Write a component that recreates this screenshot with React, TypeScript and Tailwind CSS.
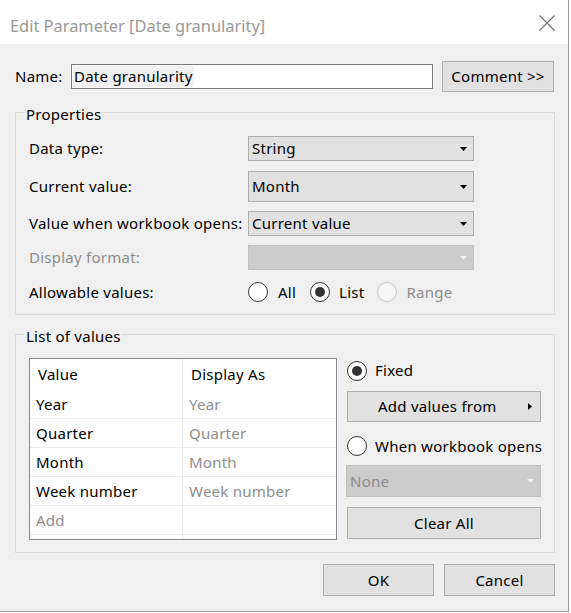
import React from "react";

function Radio({ checked = false, disabled = false }: { checked?: boolean; disabled?: boolean }) {
  return (
    <span
      className={`flex h-[20px] w-[20px] shrink-0 items-center justify-center rounded-full border ${
        disabled ? "border-[#c8c8c8] bg-[#f6f6f6]" : "border-[#333333] bg-white"
      }`}
    >
      {checked && <span className="h-[10px] w-[10px] rounded-full bg-[#333333]" />}
    </span>
  );
}

function DownArrow({ color = "#000000" }: { color?: string }) {
  return (
    <svg width="7" height="4" viewBox="0 0 7 4" className="shrink-0">
      <path d="M0 0H7L3.5 4Z" fill={color} />
    </svg>
  );
}

function RightArrow() {
  return (
    <svg width="4" height="7" viewBox="0 0 4 7" className="shrink-0">
      <path d="M0 0L4 3.5L0 7Z" fill="#000000" />
    </svg>
  );
}

function Select({
  value,
  heightClass,
  disabled = false,
  widthClass = "w-[226px]",
}: {
  value: string;
  heightClass: string;
  disabled?: boolean;
  widthClass?: string;
}) {
  return (
    <div
      className={`flex items-center justify-between border pl-[3px] pr-[6px] ${widthClass} ${heightClass} ${
        disabled ? "border-[#bfbfbf] bg-[#cccccc] text-[#8d8d8d]" : "border-[#adadad] bg-[#e1e1e1] text-black"
      }`}
    >
      <span>{value}</span>
      <DownArrow color={disabled ? "#f2f2f2" : "#000000"} />
    </div>
  );
}

function Group({ title, className, children }: { title: string; className: string; children: React.ReactNode }) {
  return (
    <div className={`relative ml-[15px] w-[540px] border border-[#dcdcdc] ${className}`}>
      <span className="absolute left-[9px] top-[-10px] bg-[#f0f0f0] px-[1px] leading-[22px]">{title}</span>
      {children}
    </div>
  );
}

const rows: [string, string][] = [
  ["Year", "Year"],
  ["Quarter", "Quarter"],
  ["Month", "Month"],
  ["Week number", "Week number"],
];

export default function App() {
  return (
    <div className="h-[613px] w-[571px] whitespace-nowrap bg-white font-['Noto_Sans','Liberation_Sans',sans-serif] text-[15px] tracking-[0.25px] text-black">
      <div className="flex h-[612px] w-[569px] flex-col border-b border-r border-[#9c9c9c]">
        {/* Title bar */}
        <div className="flex h-[44px] shrink-0 items-start justify-between bg-white">
          <span className="ml-[10px] mt-[14px] text-[16.4px] leading-[24px] tracking-normal text-[#999999]">
            Edit Parameter [Date granularity]
          </span>
          <svg width="16" height="16" viewBox="0 0 16 16" className="mr-[13px] mt-[15px]">
            <path d="M0.5 0.5L15.5 15.5M15.5 0.5L0.5 15.5" stroke="#707070" strokeWidth="1.1" />
          </svg>
        </div>

        {/* Body */}
        <div className="flex flex-1 flex-col bg-[#f0f0f0] pt-[17px]">
          {/* Name row */}
          <div className="flex h-[31px] items-center pl-[15px]">
            <span className="w-[56px]">Name:</span>
            <div className="flex h-[25px] w-[362px] items-center border border-[#7a7a7a] bg-white pl-[1px]">
              <span className="bg-[#f0f0f0] px-[1px] leading-[21px]">Date granularity</span>
            </div>
            <button className="ml-[9px] flex h-[31px] w-[112px] items-center justify-center border border-[#adadad] bg-[#e1e1e1]">
              Comment &gt;&gt;
            </button>
          </div>

          {/* Properties */}
          <Group title="Properties" className="mt-[20px] h-[203px] pl-[13px] pt-[23px]">
            <div className="flex h-[25px] items-center">
              <span className="w-[219px]">Data type:</span>
              <Select value="String" heightClass="h-[25px]" />
            </div>
            <div className="mt-[10px] flex h-[31px] items-center">
              <span className="w-[219px]">Current value:</span>
              <Select value="Month" heightClass="h-[31px]" />
            </div>
            <div className="mt-[9px] flex h-[25px] items-center">
              <span className="w-[219px]">Value when workbook opens:</span>
              <Select value="Current value" heightClass="h-[25px]" />
            </div>
            <div className="mt-[9px] flex h-[25px] items-center">
              <span className="w-[219px] text-[#8d8d8d]">Display format:</span>
              <Select value="" heightClass="h-[25px]" disabled />
            </div>
            <div className="mt-[12px] flex h-[20px] items-center">
              <span className="w-[219px]">Allowable values:</span>
              <Radio />
              <span className="ml-[10px]">All</span>
              <span className="ml-[14px]">
                <Radio checked />
              </span>
              <span className="ml-[9px]">List</span>
              <span className="ml-[13px]">
                <Radio disabled />
              </span>
              <span className="ml-[9px] text-[#8d8d8d]">Range</span>
            </div>
          </Group>

          {/* List of values */}
          <Group title="List of values" className="mt-[19px] flex h-[219px] pl-[13px] pt-[23px]">
            <div className="flex h-[182px] w-[308px] flex-col overflow-hidden border border-[#828790] bg-white">
              <div className="flex h-[31px] shrink-0">
                <div className="flex w-[153px] items-center border-r border-[#ececec] pl-[8px]">Value</div>
                <div className="flex flex-1 items-center pl-[8px]">Display As</div>
              </div>
              {rows.map(([v, d]) => (
                <div key={v} className="flex h-[29px] shrink-0 border-b border-[#ececec]">
                  <div className="flex w-[153px] items-center border-r border-[#ececec] pl-[6px]">{v}</div>
                  <div className="flex flex-1 items-center pl-[6px] text-[#8d8d8d]">{d}</div>
                </div>
              ))}
              <div className="flex h-[29px] shrink-0 border-b border-[#ececec]">
                <div className="flex w-[153px] items-center border-r border-[#ececec] pl-[6px] text-[#8d8d8d]">
                  Add
                </div>
                <div className="flex-1" />
              </div>
              <div className="flex flex-1">
                <div className="w-[153px] border-r border-[#ececec]" />
              </div>
            </div>

            <div className="ml-[10px] flex w-[194px] flex-col">
              <div className="flex h-[25px] items-center">
                <Radio checked />
                <span className="ml-[8px]">Fixed</span>
              </div>
              <button className="mt-[8px] flex h-[31px] items-center border border-[#adadad] bg-[#e1e1e1] pl-[30px] pr-[8px]">
                <span className="flex-1 text-left">Add values from</span>
                <RightArrow />
              </button>
              <div className="mt-[12px] flex h-[24px] items-center">
                <Radio />
                <span className="ml-[8px]">When workbook opens</span>
              </div>
              <div className="-ml-[1px] mt-[7px]">
                <Select value="None" heightClass="h-[32px]" widthClass="w-[195px]" disabled />
              </div>
              <button className="mt-[10px] flex h-[32px] items-center justify-center border border-[#adadad] bg-[#e1e1e1]">
                Clear All
              </button>
            </div>
          </Group>

          {/* Bottom buttons */}
          <div className="mt-[11px] flex justify-end gap-[10px] pr-[13px]">
            <button className="flex h-[32px] w-[111px] items-center justify-center border border-[#adadad] bg-[#e1e1e1]">
              OK
            </button>
            <button className="flex h-[32px] w-[111px] items-center justify-center border border-[#adadad] bg-[#e1e1e1]">
              Cancel
            </button>
          </div>
        </div>
      </div>
    </div>
  );
}
